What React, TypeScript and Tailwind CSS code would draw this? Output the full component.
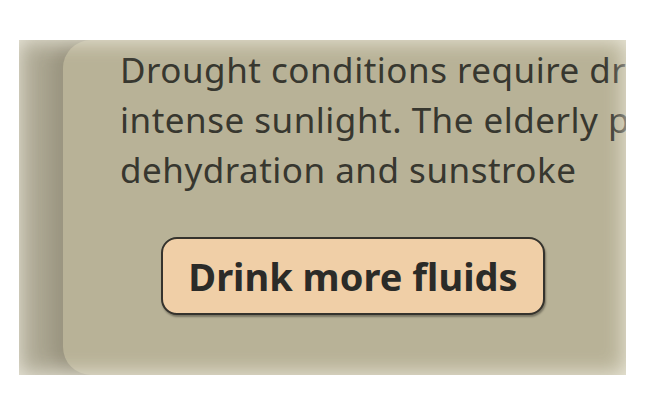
export default function App() {
  return (
    <div className="w-[650px] h-[412px] bg-white pt-[40px] pl-[19px]">
      <div className="relative w-[607px] h-[335px] overflow-hidden bg-[#aca792]">
        <div className="ml-[44px] w-[700px] h-[335px] rounded-l-[28px] bg-[#b8b297] shadow-[-12px_0_16px_rgba(60,55,40,0.16)] pl-[57px] pt-[5px]">
          <p className="font-['Noto_Sans',sans-serif] text-[35px] leading-[50px] tracking-[0.5px] text-[#37372f] whitespace-nowrap">
            Drought conditions require drinking more water in
            <br />
            intense sunlight. The elderly people are prone to
            <br />
            dehydration and sunstroke
          </p>
          <button className="mt-[42px] ml-[41px] w-[384px] h-[78px] rounded-[16px] border-2 border-[#35332d] bg-[#f0cfa7] shadow-[1px_2px_2px_rgba(0,0,0,0.35)] font-['Noto_Sans',sans-serif] text-[38px] font-bold text-[#2b2b28]">
            Drink more fluids
          </button>
        </div>
        <div className="pointer-events-none absolute inset-0 shadow-[inset_0_0_22px_rgba(245,243,232,0.9)]" />
      </div>
    </div>
  );
}
